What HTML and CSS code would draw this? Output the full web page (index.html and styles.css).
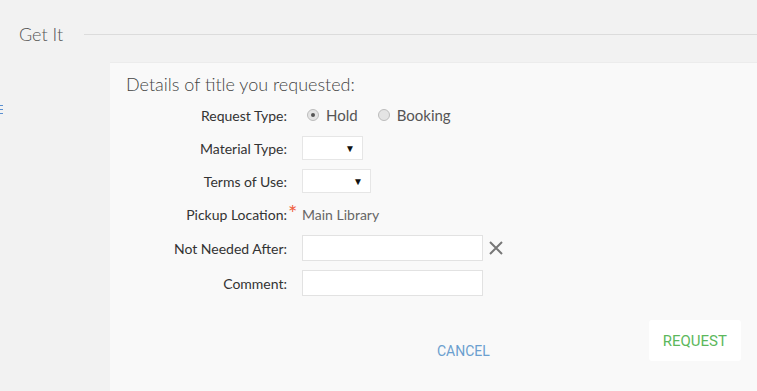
FILE: index.html
```html
<!DOCTYPE html>
<html lang="en">
<head>
    <meta charset="UTF-8">
    <meta name="viewport" content="width=device-width, initial-scale=1.0">
    <title>Get It</title>
    <link rel="stylesheet" href="styles.css">
</head>
<body>
    <div class="section-header">
        <h2 class="section-title">Get It</h2>
        <div class="section-line"></div>
    </div>

    <div class="section-body">
        <div class="sidebar">
            <div class="side-icon">
                <span></span><span></span><span></span>
            </div>
        </div>

        <div class="panel">
            <h3 class="panel-title">Details of title you requested:</h3>

            <div class="form">
                <div class="form-row">
                    <label class="form-label">Request Type:</label>
                    <div class="radio-group">
                        <label class="radio"><span class="radio-dot checked"></span>Hold</label>
                        <label class="radio"><span class="radio-dot"></span>Booking</label>
                    </div>
                </div>

                <div class="form-row">
                    <label class="form-label">Material Type:</label>
                    <div class="select select-small"><span class="caret">&#9660;</span></div>
                </div>

                <div class="form-row">
                    <label class="form-label">Terms of Use:</label>
                    <div class="select select-medium"><span class="caret">&#9660;</span></div>
                </div>

                <div class="form-row">
                    <label class="form-label required">Pickup Location:<span class="asterisk">*</span></label>
                    <div class="static-value">Main Library</div>
                </div>

                <div class="form-row row-tall">
                    <label class="form-label">Not Needed After:</label>
                    <div class="field-with-clear">
                        <input type="text" class="text-input">
                        <svg class="clear-icon" width="16" height="16" viewBox="0 0 16 16">
                            <path d="M2 2 L14 14 M14 2 L2 14" stroke="#777" stroke-width="2" fill="none"/>
                        </svg>
                    </div>
                </div>

                <div class="form-row row-tall">
                    <label class="form-label">Comment:</label>
                    <input type="text" class="text-input">
                </div>
            </div>

            <div class="actions">
                <button class="btn-cancel">CANCEL</button>
                <button class="btn-request">REQUEST</button>
            </div>
        </div>
    </div>
</body>
</html>
```

FILE: styles.css
```css
body {
    margin: 0;
    background-color: #f2f2f2;
    font-family: 'Lato', Arial, sans-serif;
    color: #333;
    overflow: hidden;
}
.section-header {
    display: flex;
    align-items: center;
    height: 56px;
    padding-top: 6px;
    padding-left: 19px;
}
.section-title {
    margin: 0;
    font-size: 18px;
    font-weight: 300;
    color: #555;
}
.section-line {
    flex: 1;
    margin-left: 21px;
    border-top: 1px solid #dcdcdc;
}
.section-body {
    display: flex;
}
.sidebar {
    width: 110px;
    flex-shrink: 0;
    padding-top: 43px;
}
.side-icon span {
    display: block;
    width: 3px;
    height: 1px;
    margin-bottom: 3px;
    background-color: #5a8fd0;
}
.panel {
    flex: 1;
    box-sizing: border-box;
    height: calc(100vh - 62px);
    background-color: #f9f9f9;
    border-top: 1px solid #ececec;
    padding: 9px 16px 0;
}
.panel-title {
    margin: 0;
    font-size: 18px;
    font-weight: 300;
    line-height: 24px;
    color: #444;
}
.form {
    margin-top: 7px;
    display: flex;
    flex-direction: column;
    gap: 9px;
}
.form-row {
    display: grid;
    grid-template-columns: 161px auto;
    column-gap: 15px;
    align-items: center;
    justify-items: start;
    height: 24px;
}
.row-tall {
    height: 26px;
}
.form-label {
    justify-self: end;
    font-size: 14px;
    color: #333;
}
.required {
    position: relative;
}
.asterisk {
    position: absolute;
    left: 100%;
    top: -7px;
    margin-left: 1px;
    color: #f0603f;
    font-size: 22px;
}
.radio-group {
    display: flex;
    gap: 20px;
    padding-left: 5px;
}
.radio {
    display: flex;
    align-items: center;
    font-size: 15px;
    color: #555;
}
.radio-dot {
    width: 12px;
    height: 12px;
    border-radius: 50%;
    border: 1px solid #bdbdbd;
    background-color: #e4e4e4;
    margin-right: 7px;
    box-sizing: border-box;
    position: relative;
}
.radio-dot.checked::after {
    content: "";
    position: absolute;
    left: 3px;
    top: 3px;
    width: 4px;
    height: 4px;
    border-radius: 50%;
    background-color: #555;
}
.select {
    height: 24px;
    box-sizing: border-box;
    background-color: white;
    border: 1px solid #e6e6e6;
    display: flex;
    align-items: center;
    justify-content: flex-end;
    padding-right: 7px;
}
.select-small {
    width: 61px;
}
.select-medium {
    width: 69px;
}
.caret {
    font-size: 10px;
    color: #111;
}
.static-value {
    font-size: 14px;
    color: #666;
}
.field-with-clear {
    display: flex;
    align-items: center;
    gap: 5px;
}
.text-input {
    width: 181px;
    height: 26px;
    box-sizing: border-box;
    border: 1px solid #e2e2e2;
    background-color: white;
    padding: 0 6px;
    font-family: inherit;
}
.clear-icon {
    display: block;
}
.actions {
    margin-top: 24px;
    display: flex;
    align-items: flex-end;
    padding-left: 311px;
}
.btn-cancel,
.btn-request {
    font-family: 'Roboto', Arial, sans-serif;
    font-size: 14px;
    border: none;
    cursor: pointer;
}
.btn-cancel {
    background: none;
    color: #6b9fcf;
    padding: 0;
    line-height: 18px;
    margin-bottom: 1px;
}
.btn-request {
    margin-left: 159px;
    width: 92px;
    height: 41px;
    font-size: 15px;
    background-color: white;
    color: #5cb85c;
    border-radius: 3px;
}
```
